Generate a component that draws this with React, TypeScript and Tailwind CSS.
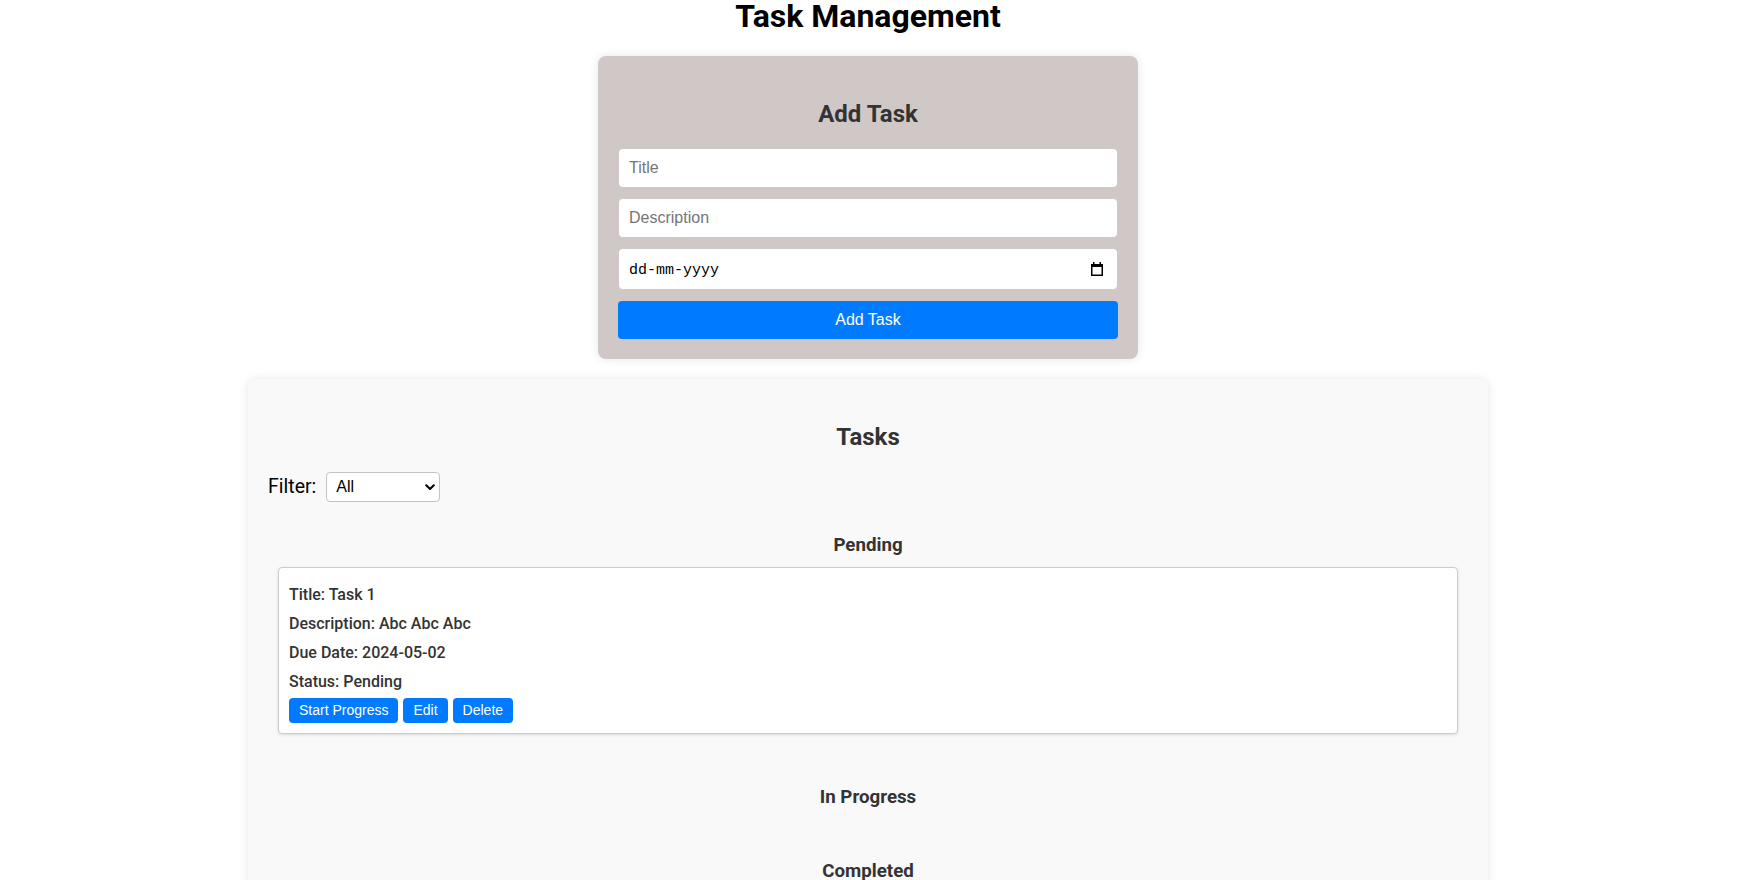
import React, { useState } from 'react';

interface Task {
  title: string;
  description: string;
  dueDate: string;
  status: 'Pending' | 'In Progress' | 'Completed';
}

const CalendarIcon: React.FC = () => (
  <svg width="12" height="14" viewBox="0 0 12 14" fill="none">
    <rect x="2" y="0" width="1.5" height="2.5" fill="#000" />
    <rect x="8.5" y="0" width="1.5" height="2.5" fill="#000" />
    <rect x="0.75" y="2.75" width="10.5" height="10.5" stroke="#000" strokeWidth="1.5" />
    <rect x="0" y="2" width="12" height="3" fill="#000" />
  </svg>
);

const Chevron: React.FC = () => (
  <svg width="10" height="7" viewBox="0 0 10 7" fill="none">
    <path d="M1.2 1.2L5 5l3.8-3.8" stroke="#000" strokeWidth="2" strokeLinecap="round" strokeLinejoin="round" />
  </svg>
);

const TaskCard: React.FC<{ task: Task }> = ({ task }) => (
  <div className="mx-[10px] bg-white border border-[#ccc] rounded pt-[12px] px-[10px] pb-[10px] shadow-[0_1px_3px_rgba(0,0,0,0.12)]">
    <div className="text-[16px] leading-[29px] font-medium text-[#333]">
      <p>Title: {task.title}</p>
      <p>Description: {task.description}</p>
      <p>Due Date: {task.dueDate}</p>
      <p>Status: {task.status}</p>
    </div>
    <div className="flex gap-[5px] mt-[2px]">
      <button className="h-[25px] px-[10px] rounded bg-[#007bff] text-white text-[14px] font-['Liberation_Sans',Arial,sans-serif]">
        Start Progress
      </button>
      <button className="h-[25px] px-[10px] rounded bg-[#007bff] text-white text-[14px] font-['Liberation_Sans',Arial,sans-serif]">
        Edit
      </button>
      <button className="h-[25px] px-[10px] rounded bg-[#007bff] text-white text-[14px] font-['Liberation_Sans',Arial,sans-serif]">
        Delete
      </button>
    </div>
  </div>
);

const App: React.FC = () => {
  const [filter, setFilter] = useState('All');
  const [tasks] = useState<Task[]>([
    { title: 'Task 1', description: 'Abc Abc Abc', dueDate: '2024-05-02', status: 'Pending' }
  ]);

  const sections: Task['status'][] = ['Pending', 'In Progress', 'Completed'];

  return (
    <div className="min-h-screen bg-white font-['Roboto',sans-serif]">
      <div className="flex flex-col items-center pr-[12px] pb-10">
        <h1 className="text-[32px] leading-[32px] font-bold text-black">Task Management</h1>

        {/* add task form */}
        <div className="w-[540px] mt-[24px] p-5 rounded-lg bg-[#d0c8c7] shadow-[0_0_10px_rgba(0,0,0,0.1)]">
          <h2 className="mt-5 mb-[17px] text-center text-[24px] leading-[36px] font-bold text-[#333]">Add Task</h2>
          <div className="flex flex-col gap-3 font-['Liberation_Sans',Arial,sans-serif]">
            <input
              type="text"
              placeholder="Title"
              className="w-[498px] h-[38px] mx-px px-[10px] rounded bg-white text-[16px] text-black placeholder:text-[#757575] outline-none"
            />
            <input
              type="text"
              placeholder="Description"
              className="w-[498px] h-[38px] mx-px px-[10px] rounded bg-white text-[16px] text-black placeholder:text-[#757575] outline-none"
            />
            <div className="relative w-[498px] h-[40px] mx-px">
              <input
                type="text"
                placeholder="dd-mm-yyyy"
                className="w-full h-full pt-[3px] px-[10px] rounded bg-white text-[15px] font-['Liberation_Mono',monospace] text-black placeholder:text-black outline-none"
              />
              <span className="absolute right-[14px] top-[13px] pointer-events-none">
                <CalendarIcon />
              </span>
            </div>
            <button className="w-full h-[38px] rounded bg-[#007bff] text-white text-[16px]">Add Task</button>
          </div>
        </div>

        {/* task list */}
        <div className="w-[1240px] mt-5 p-5 pb-16 rounded-lg bg-[#f9f9f9] shadow-[0_0_10px_rgba(0,0,0,0.1)]">
          <h2 className="mt-5 mb-[17px] text-center text-[24px] leading-[36px] font-bold text-[#333]">Tasks</h2>
          <div className="flex items-center h-[30px]">
            <label className="mr-[10px] text-[19.5px] leading-[30px] text-black">Filter:</label>
            <div className="relative">
              <select
                value={filter}
                onChange={e => setFilter(e.target.value)}
                className="appearance-none w-[114px] h-[30px] pl-[9px] border border-[#c4c4c4] rounded bg-white text-[16px] text-black font-['Liberation_Sans',Arial,sans-serif] outline-none"
              >
                <option>All</option>
                <option>Pending</option>
                <option>In Progress</option>
                <option>Completed</option>
              </select>
              <span className="absolute right-[5px] top-[12px] pointer-events-none">
                <Chevron />
              </span>
            </div>
          </div>

          <div className="flex flex-col pt-[30px]">
            {sections.map((status, i) => {
              const list = tasks.filter(t => t.status === status);
              return (
                <div key={status} className={i === 1 ? 'mt-[50px]' : i === 2 ? 'mt-[39px]' : ''}>
                  <h3 className="mb-[9px] text-center text-[18.72px] leading-[26px] font-bold text-[#333]">{status}</h3>
                  {list.map(task => (
                    <TaskCard key={task.title} task={task} />
                  ))}
                </div>
              );
            })}
          </div>
        </div>
      </div>
    </div>
  );
};

export default App;
